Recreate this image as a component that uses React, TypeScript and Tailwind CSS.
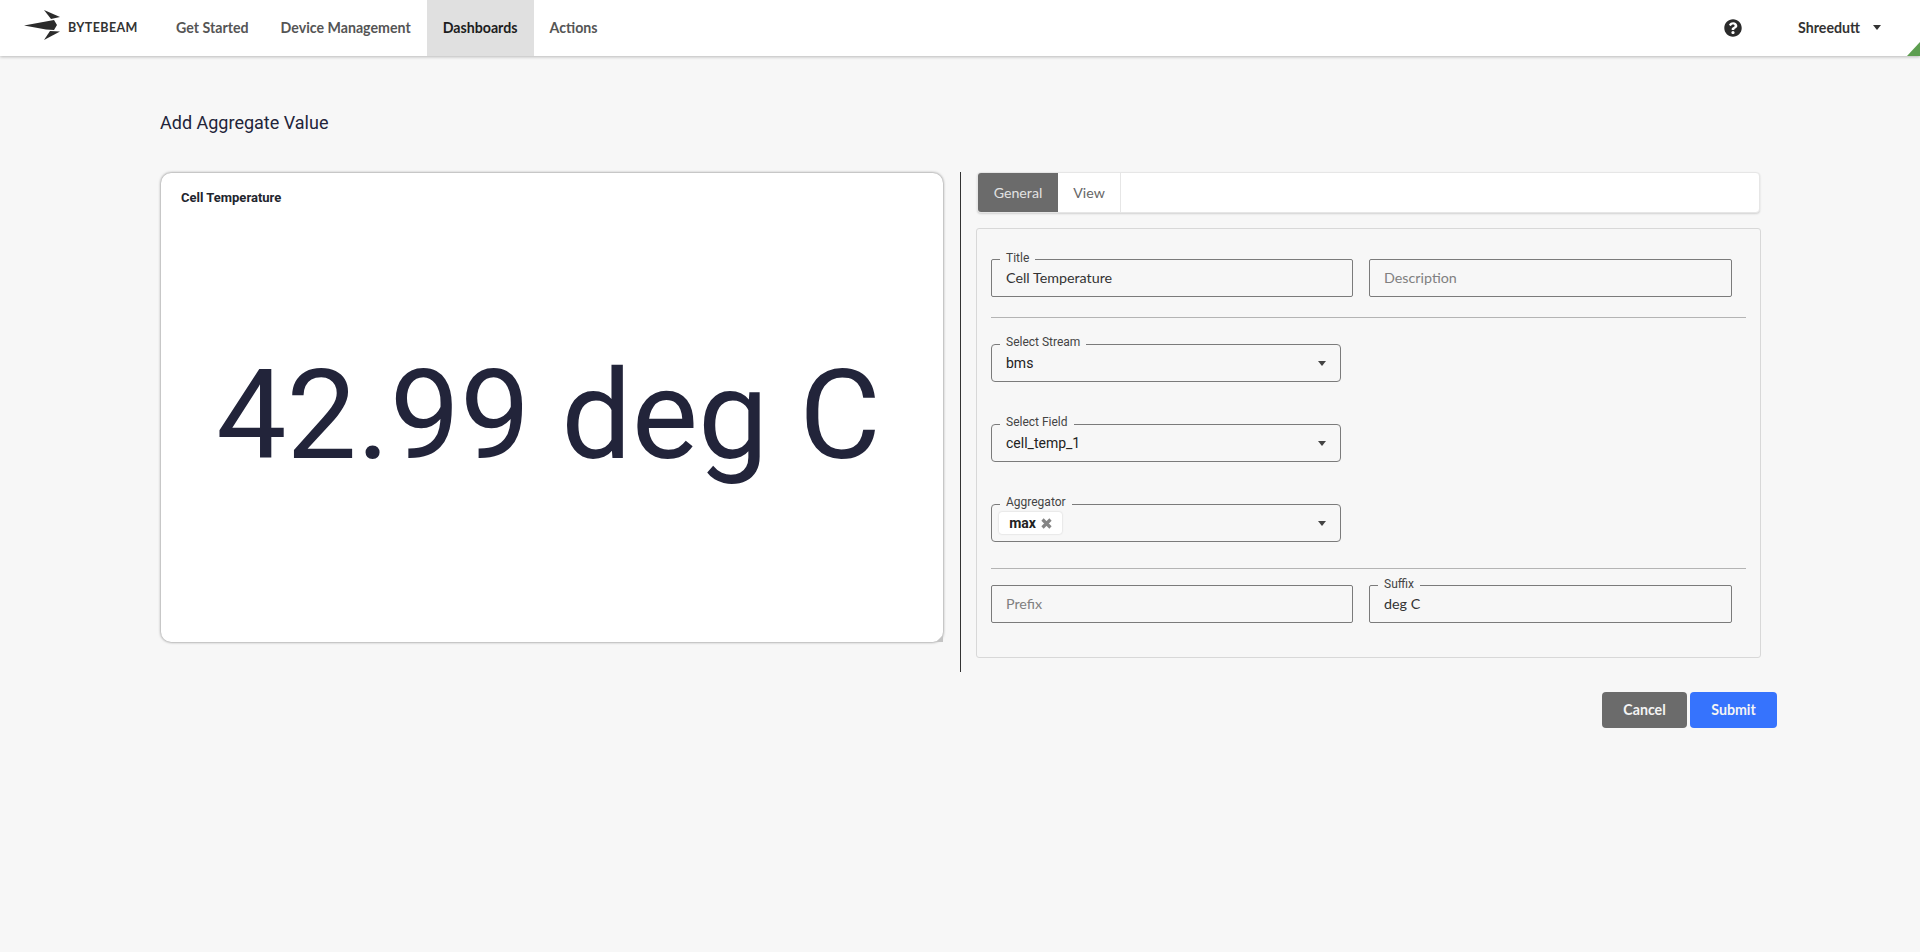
import { ReactNode } from "react";
import { FaQuestionCircle } from "react-icons/fa";

const lato = "font-['Lato',sans-serif]";
const roboto = "font-['Roboto',sans-serif]";

const Caret = ({ className = "" }: { className?: string }) => (
  <svg className={className} width="8" height="5" viewBox="0 0 8 5">
    <path d="M0 0h8L4 5z" fill="currentColor" />
  </svg>
);

const Logo = () => (
  <svg width="38" height="36" viewBox="0 0 38 36" className="shrink-0">
    <path d="M0 15.5 L30 10 L33 15 L30 20 L22 19.5 Z" fill="#2b2b2b" />
    <path d="M20 0 L36 7 L27 9 Z" fill="#2b2b2b" />
    <path d="M20 30 L26 21 L36 21.5 Z" fill="#2b2b2b" />
  </svg>
);

const NavItem = ({ label, active }: { label: string; active?: boolean }) => (
  <div
    className={`flex h-full items-center px-4 pb-[1px] text-[14.2px] font-bold ${
      active ? "bg-[#e0e0e0] text-[#1d1d1d]" : "text-[#555555]"
    }`}
  >
    {label}
  </div>
);

const Field = ({
  label,
  labelClass = "top-[-9px]",
  className,
  children,
}: {
  label?: string;
  labelClass?: string;
  className: string;
  children: ReactNode;
}) => (
  <div className={`relative h-[38px] border border-[#7b7b7b] ${className}`}>
    {label && (
      <span
        className={`absolute left-[8px] bg-[#f7f7f7] px-[6px] text-[12px] leading-[14px] text-[#444444] ${labelClass} ${roboto}`}
      >
        {label}
      </span>
    )}
    {children}
  </div>
);

const TextField = ({
  label,
  value,
  placeholder,
  className = "w-[362px]",
}: {
  label?: string;
  value?: string;
  placeholder?: string;
  className?: string;
}) => (
  <Field label={label} className={`rounded-[2px] ${className}`}>
    <div
      className={`pl-[14px] pt-[8px] text-[14.3px] leading-[20px] ${lato} ${
        value ? "text-[#333333]" : "text-[#808080]"
      }`}
    >
      {value || placeholder}
    </div>
  </Field>
);

const SelectField = ({ label, children }: { label: string; children: ReactNode }) => (
  <Field label={label} labelClass="top-[-10px]" className="w-[350px] rounded-[4px]">
    <div className="flex h-full items-center justify-between pr-[14px]">
      {children}
      <Caret className="text-[#444444]" />
    </div>
  </Field>
);

export default function App() {
  return (
    <div className={`min-h-[952px] bg-[#f7f7f7] ${lato}`}>
      <header className="relative flex h-[56px] items-center bg-white shadow-[0_1px_3px_rgba(0,0,0,0.25)]">
        <div className="flex h-full w-[160px] items-center pl-[24px]">
          <Logo />
          <span className="ml-[6px] text-[12.5px] font-bold tracking-[0.4px] text-[#333333]">
            BYTEBEAM
          </span>
        </div>
        <nav className="flex h-full">
          <NavItem label="Get Started" />
          <NavItem label="Device Management" />
          <NavItem label="Dashboards" active />
          <NavItem label="Actions" />
        </nav>
        <div className="ml-auto flex items-center pr-[39px]">
          <FaQuestionCircle className="text-[18px] text-[#2b2b2b]" />
          <span className="ml-[56px] text-[14.2px] font-bold text-[#333333]">Shreedutt</span>
          <Caret className="ml-[13px] text-[#333333]" />
        </div>
        <div className="absolute bottom-0 right-0 h-[14px] w-[13px] bg-[#5d9e50] [clip-path:polygon(100%_0,100%_100%,0_100%)]" />
      </header>

      <main className="pl-[160px]">
        <h1 className={`flex h-[116px] items-center pt-[16px] text-[18px] font-normal text-[#22243a] ${roboto}`}>
          Add Aggregate Value
        </h1>
        <div className="flex items-start">
          <section className="relative ml-[1px] mr-[1px] mt-[1px] h-[469px] w-[782px] rounded-[10px] bg-white shadow-[0_0_3px_rgba(0,0,0,0.55)]">
            <div className={`pl-[20px] pt-[16px] text-[13px] font-bold leading-[17px] text-[#22252e] ${roboto}`}>
              Cell Temperature
            </div>
            <div className={`flex h-[419px] items-center justify-center pr-[7px] text-[125px] font-normal leading-none text-[#22243a] ${roboto}`}>
              42.99 deg C
            </div>
            <div className="absolute bottom-0 right-0 h-[7px] w-[7px] bg-[#c4c4c4] [clip-path:polygon(100%_0,100%_100%,0_100%)]" />
          </section>

          <div className="ml-[16px] h-[500px] w-px bg-[#333333]" />

          <div className="ml-[16px] w-[816px]">
            <div className="flex h-[41px] w-[783px] overflow-hidden rounded-[4px] border border-[#e6e6e6] bg-white text-[14.2px] shadow-[0_1px_2px_rgba(0,0,0,0.15)]">
              <div className="flex w-[80px] items-center justify-center bg-[#6b6b6b] text-[#e2e2e2]">
                General
              </div>
              <div className="flex w-[63px] items-center justify-center border-r border-[#e6e6e6] text-[#666666]">
                View
              </div>
            </div>

            <div className="-ml-[1px] mt-[15px] h-[430px] w-[785px] rounded-[3px] border border-[#d8d8d8] px-[14px] pt-[30px]">
              <div className="flex gap-[16px]">
                <TextField label="Title" value="Cell Temperature" />
                <TextField placeholder="Description" className="w-[363px]" />
              </div>
              <hr className="mt-[20px] border-[#b4b4b4]" />
              <div className="mt-[26px] flex flex-col gap-[42px]">
                <SelectField label="Select Stream">
                  <span className={`pl-[14px] text-[14px] text-[#222222] ${roboto}`}>bms</span>
                </SelectField>
                <SelectField label="Select Field">
                  <span className={`pl-[14px] text-[14px] text-[#222222] ${roboto}`}>cell_temp_1</span>
                </SelectField>
                <SelectField label="Aggregator">
                  <span className={`ml-[7px] flex h-[22px] w-[63px] items-center justify-center gap-[5px] rounded-[3px] bg-white text-[14px] font-bold text-[#222222] shadow-[0_0_2px_rgba(0,0,0,0.2)] ${roboto}`}>
                    max
                    <svg width="11" height="11" viewBox="0 0 11 11">
                      <path d="M1.5 1.5l8 8M9.5 1.5l-8 8" stroke="#858585" strokeWidth="3.2" />
                    </svg>
                  </span>
                </SelectField>
              </div>
              <hr className="mt-[26px] border-[#b4b4b4]" />
              <div className="mt-[16px] flex gap-[16px]">
                <TextField placeholder="Prefix" />
                <TextField label="Suffix" value="deg C" className="w-[363px]" />
              </div>
            </div>

            <div className="ml-[625px] mt-[34px] flex gap-[3px] text-[14.2px] font-bold text-[#f4f4f4]">
              <button className="h-[36px] w-[85px] rounded-[4px] bg-[#6b6b6b]">Cancel</button>
              <button className="h-[36px] w-[87px] rounded-[4px] bg-[#3673fd]">Submit</button>
            </div>
          </div>
        </div>
      </main>
    </div>
  );
}
